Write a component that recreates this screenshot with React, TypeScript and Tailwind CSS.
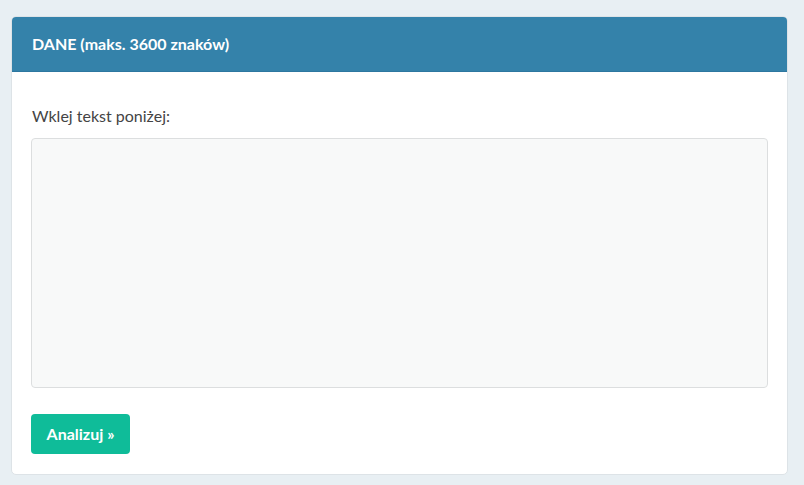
export default function App() {
  return (
    <div className="min-h-[485px] bg-[#e8eff3] pt-[16px] pl-[11px] font-['Lato','Liberation_Sans',sans-serif]">
      <div className="w-[777px] rounded-[5px] border border-[#dde3e7] bg-white overflow-hidden">
        {/* Header */}
        <div className="h-[55px] bg-[#3482aa] border-b border-[#2d77a0] flex items-center px-[20px]">
          <h3 className="text-[16px] font-bold text-white">DANE (maks. 3600 znaków)</h3>
        </div>

        {/* Body */}
        <div className="px-[19px] pt-[33px] pb-[20px]">
          <label className="block pl-[1px] text-[16px] leading-[22px] text-[#444]">Wklej tekst poniżej:</label>
          <textarea className="mt-[11px] block w-[737px] h-[250px] rounded-[4px] border border-[#dcdedf] bg-[#f8f9f9] resize-none outline-none" />
          <button className="mt-[26px] h-[40px] w-[99px] rounded-[4px] bg-[#0fbc99] text-white text-[16px] font-bold">
            Analizuj »
          </button>
        </div>
      </div>
    </div>
  );
}
